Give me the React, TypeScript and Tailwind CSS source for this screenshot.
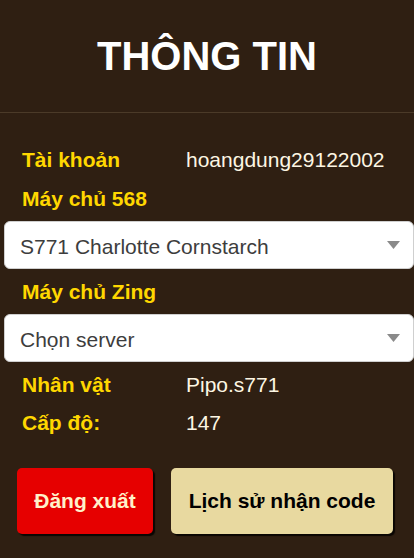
import { FC } from "react";

const InfoRow: FC<{ label: string; value?: string }> = ({ label, value }) => (
  <div className="flex flex-row items-center h-[38px] px-[22px]">
    <p className="w-[164px] font-bold text-[#ffd700] text-[21px]">{label}</p>
    {value && <p className="text-[#fdf6e3] text-[21px]">{value}</p>}
  </div>
);

const ServerSelect: FC<{ text: string }> = ({ text }) => (
  <div className="flex flex-row justify-between items-center bg-white ml-[4px] pr-[13px] pl-[15px] border border-[#cfcfcf] rounded-[6px] w-[410px] h-[48px]">
    <span className="pt-[3px] text-[#3d3d3d] text-[21px]">{text}</span>
    <svg width="13" height="8" viewBox="0 0 13 8">
      <polygon points="0,0 13,0 6.5,8" fill="#8a8a8a" />
    </svg>
  </div>
);

export default function App() {
  return (
    <div
      className="bg-[#2f1f12] w-[414px] h-[558px] overflow-hidden"
      style={{ fontFamily: '"Liberation Sans", Arial, sans-serif' }}
    >
      <div className="flex justify-center items-center border-[#4b3a28] border-b h-[113px]">
        <h1 className="font-bold text-[40px] text-white">THÔNG TIN</h1>
      </div>

      <div className="flex flex-col pt-[28px]">
        <InfoRow label="Tài khoản" value="hoangdung29122002" />
        <div className="mt-[1px]">
          <InfoRow label="Máy chủ 568" />
        </div>
        <div className="mt-[3px]">
          <ServerSelect text="S771 Charlotte Cornstarch" />
        </div>
        <div className="mt-[4px]">
          <InfoRow label="Máy chủ Zing" />
        </div>
        <div className="mt-[3px]">
          <ServerSelect text="Chọn server" />
        </div>
        <div className="mt-[4px]">
          <InfoRow label="Nhân vật" value="Pipo.s771" />
          <InfoRow label="Cấp độ:" value="147" />
        </div>

        <div className="flex flex-row gap-[18px] mt-[26px] pl-[17px]">
          <button className="bg-[#e60000] shadow-[2px_2px_1px_#0a0603] rounded-[5px] w-[136px] h-[66px] font-bold text-[#fff1c9] text-[21px]">
            Đăng xuất
          </button>
          <button className="bg-[#e8d9a0] shadow-[2px_2px_1px_#0a0603] rounded-[5px] w-[222px] h-[66px] font-bold text-[21px] text-black">
            Lịch sử nhận code
          </button>
        </div>
      </div>
    </div>
  );
}
